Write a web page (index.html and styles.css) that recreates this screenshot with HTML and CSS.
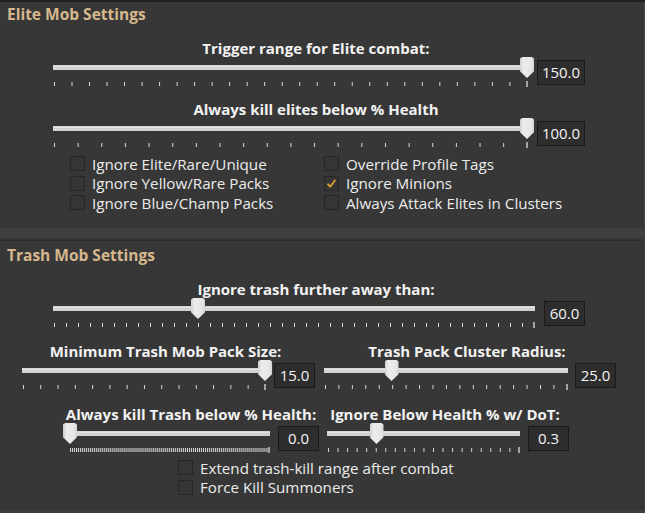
FILE: index.html
```html
<!DOCTYPE html>
<html lang="en">
<head>
<meta charset="UTF-8" />
<title>Combat Settings</title>
<link rel="stylesheet" href="styles.css">
</head>
<body>
<div class="window">
  <section class="panel panel--elite">
    <h2 class="panel-title">Elite Mob Settings</h2>
    <div class="panel-body">
      <div class="slider trigger-range">
        <div class="slider-label">Trigger range for Elite combat:</div>
        <div class="slider-row">
          <div class="track-area">
            <div class="track"></div>
            <div class="ticks" style="--ticks: 27"></div>
            <div class="thumb" style="--pos: 1"></div>
          </div>
          <div class="value">150.0</div>
        </div>
      </div>

      <div class="slider elite-health">
        <div class="slider-label">Always kill elites below % Health</div>
        <div class="slider-row">
          <div class="track-area">
            <div class="track"></div>
            <div class="ticks" style="--ticks: 20"></div>
            <div class="thumb" style="--pos: 1"></div>
          </div>
          <div class="value">100.0</div>
        </div>
      </div>

      <div class="checks checks--elite">
        <label class="check"><span class="box"></span>Ignore Elite/Rare/Unique</label>
        <label class="check"><span class="box"></span>Override Profile Tags</label>
        <label class="check"><span class="box"></span>Ignore Yellow/Rare Packs</label>
        <label class="check"><span class="box checked"><svg viewBox="0 0 13 13" width="13" height="13"><path d="M2.6 6.9 L5.2 9.7 L10.4 2.8" fill="none" stroke="#e3a034" stroke-width="1.8"/></svg></span>Ignore Minions</label>
        <label class="check"><span class="box"></span>Ignore Blue/Champ Packs</label>
        <label class="check"><span class="box"></span>Always Attack Elites in Clusters</label>
      </div>
    </div>
  </section>

  <section class="panel panel--trash">
    <h2 class="panel-title">Trash Mob Settings</h2>
    <div class="panel-body">
      <div class="slider trash-range">
        <div class="slider-label">Ignore trash further away than:</div>
        <div class="slider-row">
          <div class="track-area">
            <div class="track"></div>
            <div class="ticks" style="--ticks: 40"></div>
            <div class="thumb" style="--pos: 0.3"></div>
          </div>
          <div class="value">60.0</div>
        </div>
      </div>

      <div class="slider-pair pack-row">
        <div class="slider pack-size">
          <div class="slider-label">Minimum Trash Mob Pack Size:</div>
          <div class="slider-row">
            <div class="track-area">
              <div class="track"></div>
              <div class="ticks" style="--ticks: 14"></div>
              <div class="thumb" style="--pos: 1"></div>
            </div>
            <div class="value">15.0</div>
          </div>
        </div>
        <div class="slider cluster-radius">
          <div class="slider-label">Trash Pack Cluster Radius:</div>
          <div class="slider-row">
            <div class="track-area">
              <div class="track"></div>
              <div class="ticks" style="--ticks: 18"></div>
              <div class="thumb" style="--pos: 0.275"></div>
            </div>
            <div class="value">25.0</div>
          </div>
        </div>
      </div>

      <div class="slider-pair health-row">
        <div class="slider trash-health">
          <div class="slider-label">Always kill Trash below % Health:</div>
          <div class="slider-row">
            <div class="track-area">
              <div class="track"></div>
              <div class="ticks" style="--ticks: 100"></div>
              <div class="thumb" style="--pos: 0"></div>
            </div>
            <div class="value">0.0</div>
          </div>
        </div>
        <div class="slider dot-health">
          <div class="slider-label">Ignore Below Health % w/ DoT:</div>
          <div class="slider-row">
            <div class="track-area">
              <div class="track"></div>
              <div class="ticks" style="--ticks: 20"></div>
              <div class="thumb" style="--pos: 0.254"></div>
            </div>
            <div class="value">0.3</div>
          </div>
        </div>
      </div>

      <div class="checks checks--trash">
        <label class="check"><span class="box"></span>Extend trash-kill range after combat</label>
        <label class="check"><span class="box"></span>Force Kill Summoners</label>
      </div>
    </div>
  </section>
</div>
</body>
</html>
```

FILE: styles.css
```css
/* Base */
* {
  box-sizing: border-box;
}
body {
  margin: 0;
  background: #3f3f3f;
  font-family: 'Open Sans', 'Noto Sans', sans-serif;
  color: #eaeaea;
  width: 645px;
  height: 513px;
  overflow: hidden;
}
.window {
  border-top: 2px solid #1f1f1f;
}

/* Panels */
.panel {
  width: 643px;
  background: #373737;
  border-right: 1px solid #2e2e2e;
}
.panel--elite {
  height: 226px;
  padding-top: 2px;
}
.panel--trash {
  margin-top: 12px;
  height: 270px;
  padding-top: 4px;
  border-top: 1px solid #2a2a2a;
  box-shadow: 0 -1px 2px rgba(0,0,0,0.25);
}
.panel-title {
  margin: 0 0 14px 7px;
  font-size: 15.5px;
  line-height: 20px;
  font-weight: 700;
  color: #d6b78e;
}
.panel-body {
  width: 632px;
  display: flex;
  flex-direction: column;
  align-items: center;
}

/* Sliders */
.slider {
  display: flex;
  flex-direction: column;
  align-items: center;
  --track: 487px;
  --value: 41px;
  --gap: 2px;
}
.slider-label {
  font-size: 15px;
  line-height: 20px;
  font-weight: 700;
  color: #f2f2f2;
  margin-bottom: -1px;
  white-space: nowrap;
}
.slider-row {
  display: flex;
  gap: var(--gap);
}
.track-area {
  position: relative;
  width: var(--track);
  height: 32px;
}
.track {
  position: absolute;
  left: 6px;
  right: 6px;
  top: 8px;
  height: 5px;
  background: linear-gradient(#d0d0d0, #e4e4e4 30%, #c9c9c9 55%, #dedede 80%, #c4c4c4);
}
.ticks {
  position: absolute;
  left: 7px;
  right: 6px;
  top: 25px;
  height: 4px;
  background: linear-gradient(to right, #dadada 0 1px, transparent 1px) repeat-x;
  background-size: calc((100% - 1px) / var(--ticks)) 100%;
}
.ticks::after {
  content: "";
  position: absolute;
  right: 0;
  top: -1px;
  width: 2px;
  height: 6px;
  background: #a4a4a4;
}
.thumb {
  position: absolute;
  top: 0;
  left: calc(var(--pos) * (100% - 14px));
  width: 14px;
  height: 21px;
  background: linear-gradient(to right, #cfcfcf, #ececec 25%, #e6e6e6 80%, #d2d2d2);
  clip-path: polygon(15% 0, 85% 0, 100% 7%, 100% 68%, 50% 100%, 0 68%, 0 7%);
}
.value {
  margin-top: 3px;
  width: var(--value);
  height: 25px;
  background: #2d2d2d;
  border: 1px solid #1a1a1a;
  color: #f4f4f4;
  font-size: 15px;
  line-height: 23px;
  text-align: center;
}

.trigger-range {
  --value: 48px;
  --gap: 3px;
}
.elite-health {
  margin-top: 10px;
  --value: 48px;
  --gap: 3px;
}
.trash-range {
  --track: 494px;
  --gap: 3px;
}
.slider-pair {
  display: flex;
  align-items: flex-start;
}
.pack-row {
  margin-top: 11px;
  gap: 3px;
}
.health-row {
  margin-top: 12px;
  gap: 2px;
}
.pack-size {
  --track: 256px;
}
.cluster-radius {
  --track: 256px;
  --gap: 1px;
}
.trash-health {
  --track: 213px;
}
.dot-health {
  --track: 205px;
}

/* Checkboxes */
.checks {
  align-self: stretch;
  display: grid;
  font-size: 15.2px;
  color: #ececec;
}
.checks--elite {
  margin-top: 4px;
  padding-left: 70px;
  grid-template-columns: 254px 1fr;
}
.checks--trash {
  margin-top: 3px;
  padding-left: 178px;
}
.check {
  display: flex;
  align-items: center;
  height: 19.5px;
  gap: 7px;
  white-space: nowrap;
  cursor: pointer;
}
.box {
  width: 15px;
  height: 15px;
  border: 1px solid #262626;
  background: #353535;
  display: flex;
  align-items: center;
  justify-content: center;
  flex: none;
}
```
